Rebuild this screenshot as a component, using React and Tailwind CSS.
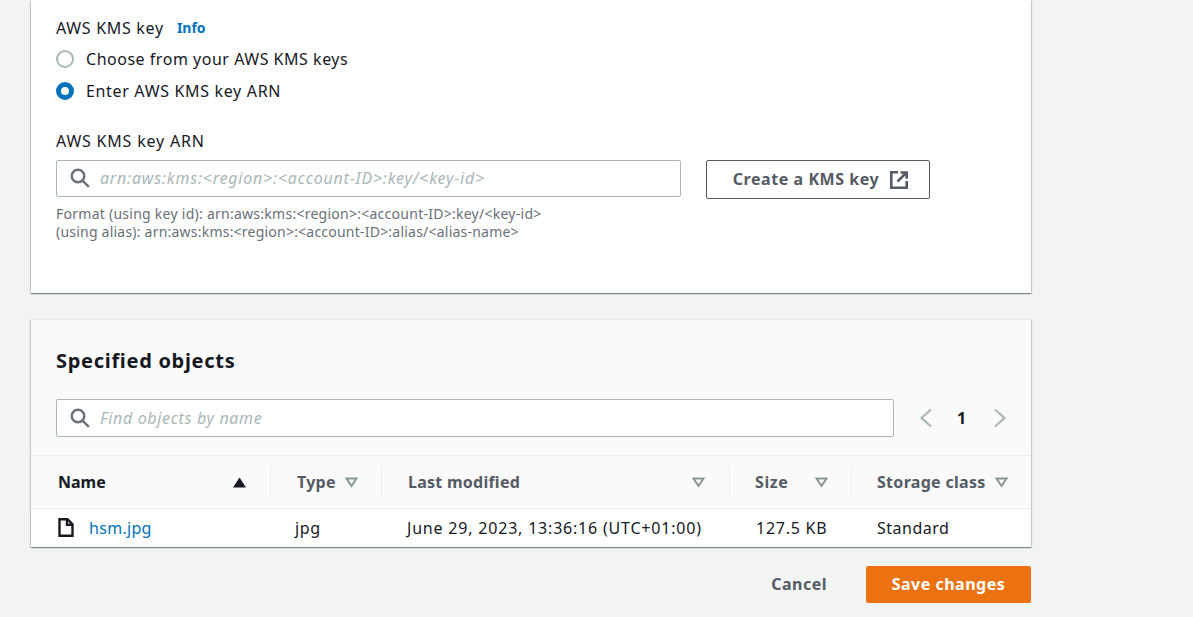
import React from 'react';

const SearchIcon = () => (
    <svg width="20" height="20" viewBox="0 0 20 20" fill="none" stroke="#687078" strokeWidth="2.4" className="shrink-0">
        <circle cx="8" cy="8" r="6.3" />
        <path d="M12.5 12.5l5.5 5.5" strokeLinecap="square" />
    </svg>
);

const SortDown = () => (
    <svg width="13" height="11" viewBox="0 0 13 11" fill="none" stroke="#879596" strokeWidth="2" className="shrink-0">
        <path d="M1.5 1.5h10L6.5 9z" />
    </svg>
);

const SortUp = () => (
    <svg width="13" height="11" viewBox="0 0 13 11" fill="#16191f" className="shrink-0">
        <path d="M6.5 0.5L13 10.5H0z" />
    </svg>
);

const HeaderCell = ({ label, dark, iconClass = 'justify-between', children, pad = 'pl-[26px] pr-[24px]', track = '' }) => (
    <div className={`flex items-center h-[32px] ${pad} ${iconClass} ${dark ? 'text-[#16191f]' : 'text-[#545b64]'} font-bold`}>
        <span className={track}>{label}</span>
        {children}
    </div>
);

const App = () => {
    return (
        <div className="h-[617px] overflow-hidden bg-[#f2f3f3] pl-[31px] w-[1193px] text-[16px] text-[#16191f] font-['Noto_Sans',sans-serif]">
            <div className="w-[1000px] h-[293px] bg-white shadow-[0_1px_1px_0_rgba(0,28,36,0.3),1px_1px_1px_0_rgba(0,28,36,0.15),-1px_1px_1px_0_rgba(0,28,36,0.15)] pl-[25px] pt-[17px]">
                <div className="flex items-center h-[22px] leading-[22px]">
                    <span className="tracking-[0.7px]">AWS KMS key</span>
                    <span className="ml-[13px] text-[14px] font-bold text-[#0073bb]">Info</span>
                </div>
                <div className="flex items-center mt-[9px] h-[22px]">
                    <span className="w-[18px] h-[18px] rounded-full border-2 border-[#aab7b8] bg-white"></span>
                    <span className="ml-[12px] tracking-[0.52px]">Choose from your AWS KMS keys</span>
                </div>
                <div className="flex items-center mt-[10px] h-[22px]">
                    <span className="w-[18px] h-[18px] rounded-full border-[5px] border-[#0073bb] bg-white"></span>
                    <span className="ml-[12px] tracking-[0.67px]">Enter AWS KMS key ARN</span>
                </div>
                <div className="mt-[28px] h-[22px] leading-[22px] tracking-[0.8px]">AWS KMS key ARN</div>
                <div className="flex items-start mt-[8px]">
                    <div className="w-[625px] h-[37px] flex items-center border border-[#aab7b8] rounded-[2px] pl-[13px] pb-[1px]">
                        <SearchIcon />
                        <span className="ml-[10px] italic text-[#aab7b8] tracking-[0.78px]">arn:aws:kms:&lt;region&gt;:&lt;account-ID&gt;:key/&lt;key-id&gt;</span>
                    </div>
                    <button className="ml-[25px] w-[224px] h-[39px] flex items-center justify-center gap-[11px] border border-[#545b64] rounded-[2px] font-bold text-[#545b64] bg-white pb-[2px] pl-[5px]">
                        <span className="tracking-[0.56px]">Create a KMS key</span>
                        <svg width="18" height="18" viewBox="0 0 18 18" fill="none" stroke="#545b64" strokeWidth="2.6" className="mt-[2px]">
                            <path d="M8 1.3H1.3v15.4h15.4V10" />
                            <path d="M7.5 10.5L16 2M10.5 1.5h6.2v6.2" />
                        </svg>
                    </button>
                </div>
                <div className="mt-[6px] text-[14px] leading-[18px] text-[#687078]">
                    <div className="tracking-[0.26px]">Format (using key id): arn:aws:kms:&lt;region&gt;:&lt;account-ID&gt;:key/&lt;key-id&gt;</div>
                    <div className="tracking-[0.22px]">(using alias): arn:aws:kms:&lt;region&gt;:&lt;account-ID&gt;:alias/&lt;alias-name&gt;</div>
                </div>
            </div>

            <div className="w-[1000px] h-[228px] mt-[26px] bg-white shadow-[0_1px_1px_0_rgba(0,28,36,0.3),1px_1px_1px_0_rgba(0,28,36,0.15),-1px_1px_1px_0_rgba(0,28,36,0.15)] border-t border-[#eaeded]">
                <div className="bg-[#fafafa] h-[136px] border-b border-[#eaeded] pl-[25px] pt-[26px]">
                    <h2 className="text-[20px] leading-[30px] font-bold tracking-[0.7px]">Specified objects</h2>
                    <div className="flex items-center mt-[23px]">
                        <div className="w-[838px] h-[38px] flex items-center bg-white border border-[#aab7b8] rounded-[2px] pl-[13px]">
                            <SearchIcon />
                            <span className="ml-[10px] italic text-[#aab7b8] tracking-[0.65px]">Find objects by name</span>
                        </div>
                        <div className="flex items-center ml-[25px]">
                            <svg width="14" height="20" viewBox="0 0 14 20" fill="none" stroke="#aab7b8" strokeWidth="2.2">
                                <path d="M12 1.5L2.5 10l9.5 8.5" />
                            </svg>
                            <span className="ml-[24px] font-bold text-[#16191f]">1</span>
                            <svg width="14" height="20" viewBox="0 0 14 20" fill="none" stroke="#aab7b8" strokeWidth="2.2" className="ml-[27px]">
                                <path d="M2 1.5L11.5 10 2 18.5" />
                            </svg>
                        </div>
                    </div>
                </div>
                <div className="bg-[#fafafa] h-[53px] border-b border-[#eaeded] grid grid-cols-[239px_111px_348px_122px_180px] items-center">
                    <HeaderCell label="Name" dark pad="pl-[27px] pr-[24px]"><SortUp /></HeaderCell>
                    <div className="border-l border-[#eaeded]"><HeaderCell label="Type" iconClass="gap-[9px]" pad="pl-[26px]" track="tracking-[0.25px]"><SortDown /></HeaderCell></div>
                    <div className="border-l border-[#eaeded]"><HeaderCell label="Last modified" pad="pl-[26px] pr-[24px]" track="tracking-[0.25px]"><SortDown /></HeaderCell></div>
                    <div className="border-l border-[#eaeded]"><HeaderCell label="Size" pad="pl-[25px] pr-[23px]" track="tracking-[0.6px]"><SortDown /></HeaderCell></div>
                    <div className="border-l border-[#eaeded]"><HeaderCell label="Storage class" pad="pl-[25px] pr-[23px]" track="tracking-[0.3px]"><SortDown /></HeaderCell></div>
                </div>
                <div className="h-[37px] grid grid-cols-[239px_111px_348px_122px_180px] items-center">
                    <div className="flex items-center pl-[27px]">
                        <svg width="16" height="19" viewBox="0 0 16 19" fill="none" stroke="#16191f" strokeWidth="2.4">
                            <path d="M1.5 1.2h8L14.5 6.2v11.6h-13z" />
                            <path d="M9 1.2v5.5h5.5" />
                        </svg>
                        <span className="ml-[15px] text-[#0073bb] tracking-[0.3px]">hsm.jpg</span>
                    </div>
                    <div className="pl-[25px] tracking-[0.6px]">jpg</div>
                    <div className="pl-[26px] tracking-[0.8px]">June 29, 2023, 13:36:16 (UTC+01:00)</div>
                    <div className="pl-[27px] tracking-[0.75px]">127.5 KB</div>
                    <div className="pl-[26px] tracking-[0.5px]">Standard</div>
                </div>
            </div>

            <div className="w-[1000px] flex items-center justify-end mt-[19px]">
                <span className="font-bold text-[#545b64] tracking-[0.5px] pb-[2px]">Cancel</span>
                <button className="ml-[39px] w-[165px] h-[37px] rounded-[2px] bg-[#ec7211] text-white font-bold tracking-[0.5px] pb-[2px]">Save changes</button>
            </div>
        </div>
    );
};

export default App;
